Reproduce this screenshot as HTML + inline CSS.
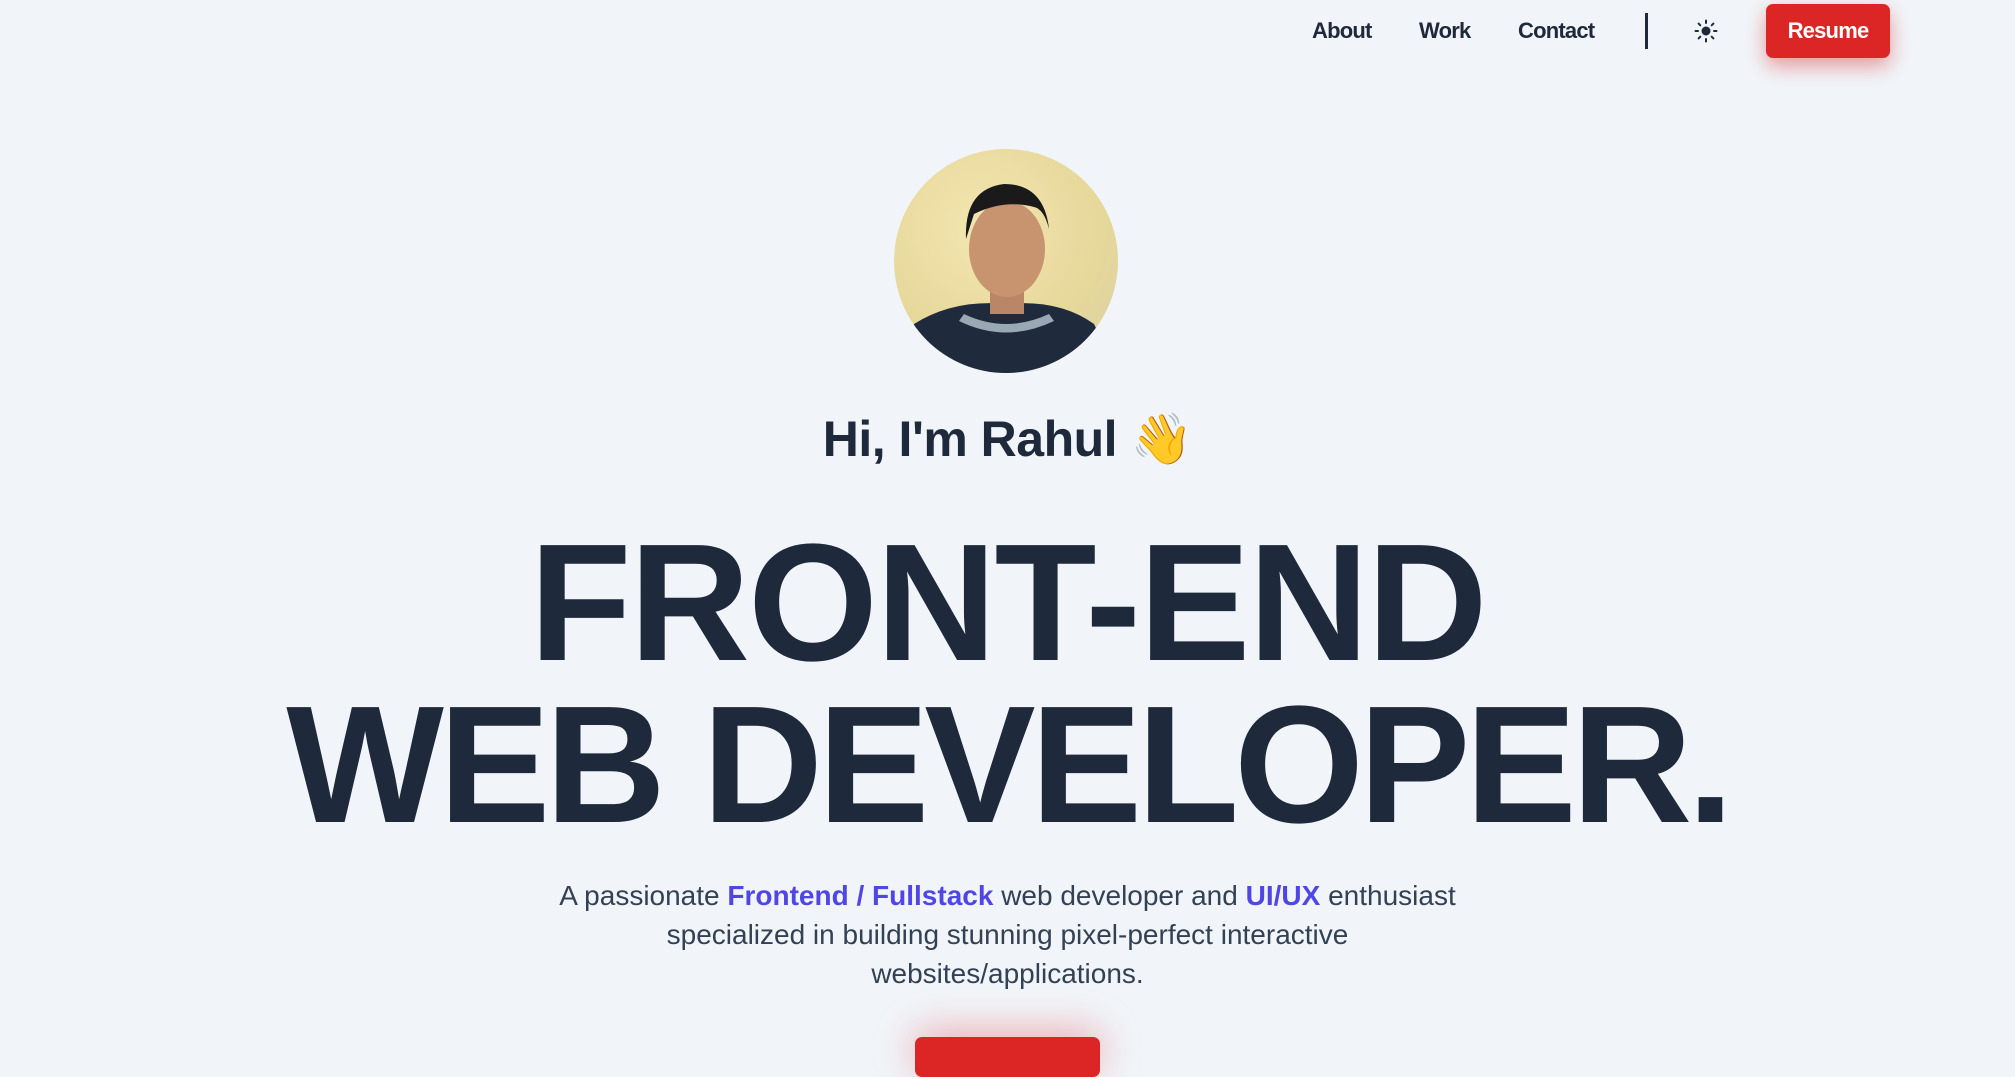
<!DOCTYPE html>
<html><head><meta charset="utf-8"><style>
html,body{margin:0;padding:0;width:2015px;height:1044px;overflow:hidden;background:#f1f5f9;font-family:"Liberation Sans",sans-serif;color:#1e293b}
.nav a{position:absolute;top:18px;font-weight:bold;font-size:22px;letter-spacing:-0.8px;color:#1e293b;text-decoration:none}
.div{position:absolute;left:1645px;top:13px;width:3px;height:36px;background:#1e293b}
.resume{position:absolute;left:1766px;top:4px;width:124px;height:54px;background:#dc2626;border-radius:7px;color:#fff;font-weight:bold;font-size:22px;letter-spacing:-0.8px;text-align:center;line-height:54px;box-shadow:0 8px 20px rgba(220,38,38,.45)}
.avatar{position:absolute;left:894px;top:149px;width:224px;height:224px;border-radius:50%;overflow:hidden;background:radial-gradient(circle at 40% 35%,#f3e6b0,#e6d79a 60%,#d6cfa8)}
.hi{position:absolute;top:410px;left:0;width:2015px;text-align:center;font-weight:bold;font-size:50px;letter-spacing:-0.5px}
.big{position:absolute;left:0;width:2015px;text-align:center;font-weight:bold;font-size:167px;line-height:1}
.p{position:absolute;top:876px;left:0;width:2015px;text-align:center;font-size:28px;line-height:39px;color:#334155}
.p b{color:#4f46e5}
.btn2{position:absolute;left:915px;top:1037px;width:185px;height:40px;background:#dc2626;border-radius:7px;box-shadow:0 -6px 40px rgba(220,38,38,.35)}
</style></head><body>
<div class="nav"><a style="left:1312px">About</a><a style="left:1419px">Work</a><a style="left:1518px">Contact</a></div>
<div class="div"></div>
<svg style="position:absolute;left:1694px;top:19px" width="24" height="24" viewBox="0 0 24 24"><circle cx="12" cy="12" r="4.5" fill="#1e293b"/><g stroke="#1e293b" stroke-width="2" stroke-linecap="round"><path d="M12 1.5v2.5M12 20v2.5M1.5 12h2.5M20 12h2.5M4.6 4.6l1.7 1.7M17.7 17.7l1.7 1.7M4.6 19.4l1.7-1.7M17.7 6.3l1.7-1.7"/></g></svg>
<div class="resume">Resume</div>
<div class="avatar"><svg width="224" height="224" viewBox="0 0 224 224">
<path d="M0 224 L20 175 Q60 150 112 155 Q165 150 200 175 L224 224Z" fill="#1f2a3c"/>
<path d="M70 165 Q112 185 155 165 L160 172 Q112 195 65 172Z" fill="#9aa7b5"/>
<rect x="96" y="120" width="34" height="45" fill="#b98767"/>
<ellipse cx="113" cy="100" rx="38" ry="48" fill="#c8946f"/>
<path d="M72 90 Q70 40 110 35 Q150 35 155 80 Q150 60 140 58 Q110 50 80 65 Z" fill="#1a1a1a"/>
</svg></div>
<div class="hi">Hi, I'm Rahul 👋</div>
<div class="big" style="top:520px;letter-spacing:-2px">FRONT-END</div>
<div class="big" style="top:682px;letter-spacing:-5px">WEB DEVELOPER.</div>
<div class="p">A passionate <b>Frontend / Fullstack</b> web developer and <b>UI/UX</b> enthusiast<br>specialized in building stunning pixel-perfect interactive<br>websites/applications.</div>
<div class="btn2"></div>
</body></html>
